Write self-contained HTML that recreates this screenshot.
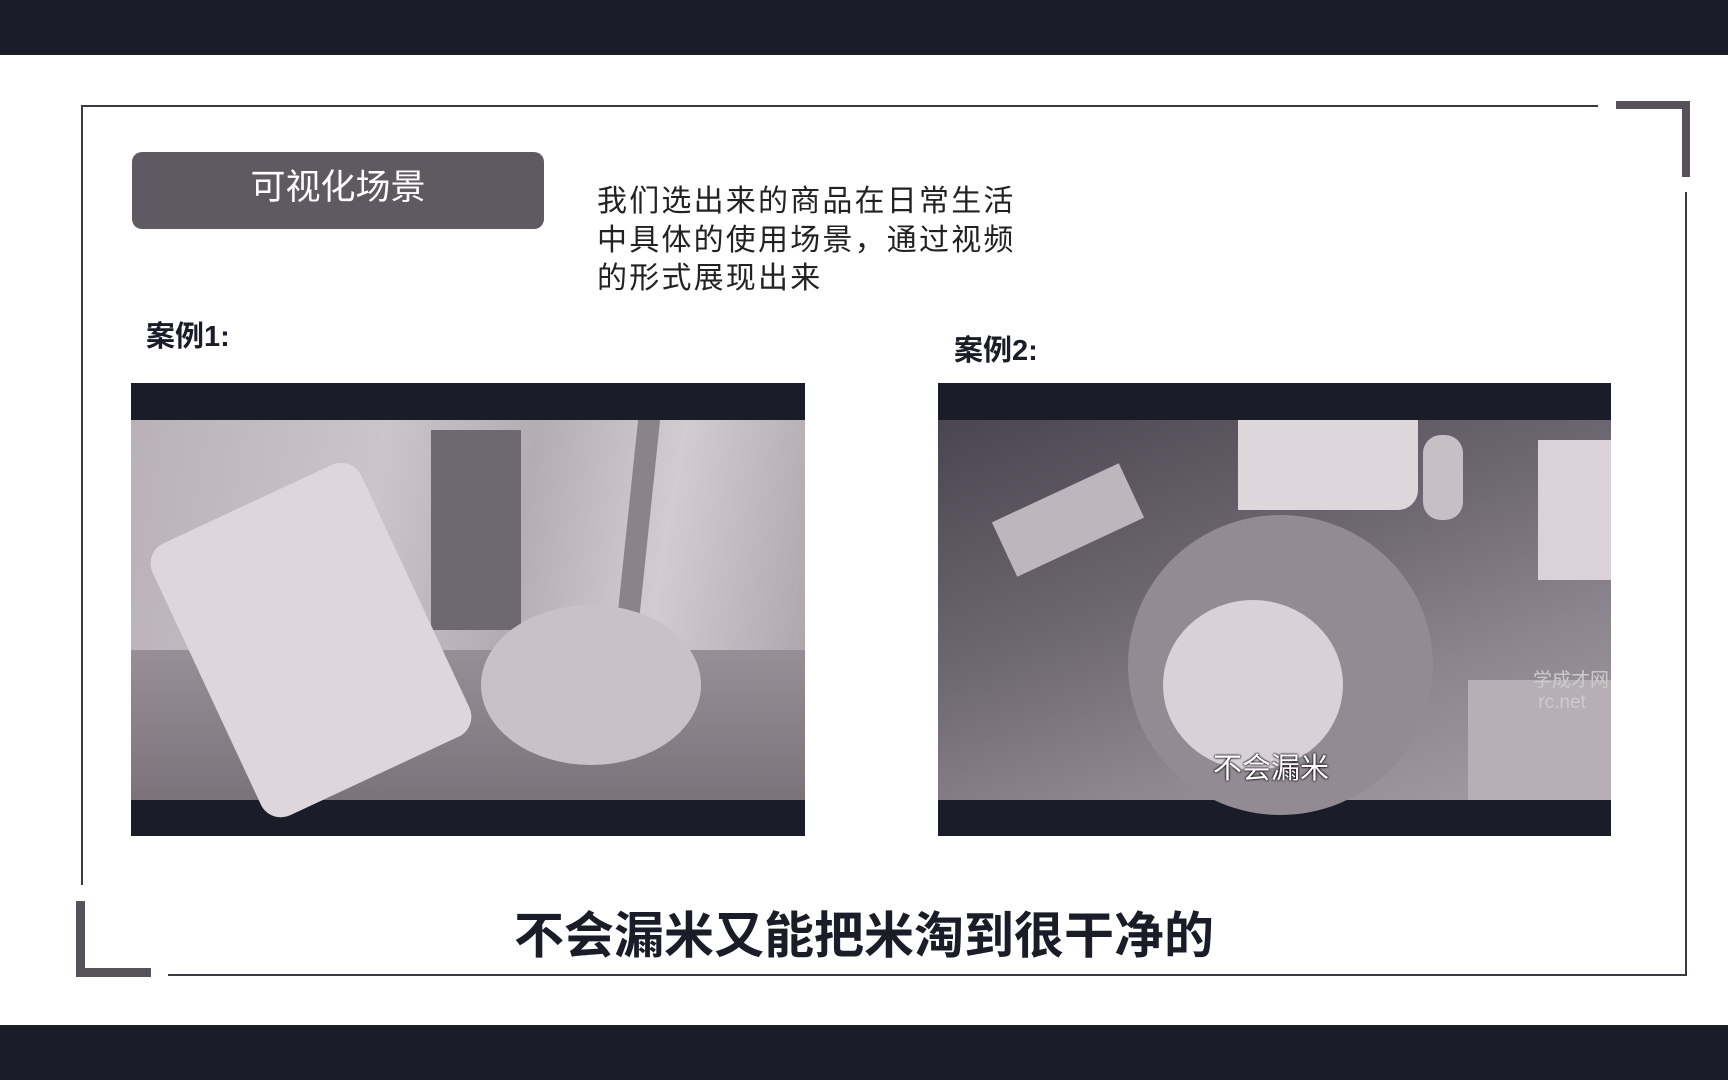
<!DOCTYPE html>
<html><head><meta charset="utf-8"><style>
*{margin:0;padding:0;box-sizing:border-box}
body{width:1728px;height:1080px;background:#fff;position:relative;overflow:hidden;font-family:"Liberation Sans","Noto Sans CJK SC",sans-serif;color:#1a1d27}
.a{position:absolute}
.dk{background:#1a1d27}
.ln{background:#3a3a44}
.br{background:#57525a}
</style></head><body>
<div class="a dk" style="left:0;top:0;width:1728px;height:55px"></div>
<div class="a dk" style="left:0;top:1025px;width:1728px;height:55px"></div>
<!-- frame -->
<div class="a ln" style="left:81px;top:105px;width:1517px;height:2px"></div>
<div class="a ln" style="left:81px;top:105px;width:2px;height:780px"></div>
<div class="a ln" style="left:1685px;top:192px;width:2px;height:784px"></div>
<div class="a ln" style="left:168px;top:974px;width:1519px;height:2px"></div>
<div class="a br" style="left:1616px;top:101px;width:74px;height:8px"></div>
<div class="a br" style="left:1682px;top:101px;width:8px;height:76px"></div>
<div class="a br" style="left:76px;top:901px;width:9px;height:76px"></div>
<div class="a br" style="left:76px;top:968px;width:75px;height:9px"></div>
<!-- label -->
<div class="a" style="left:132px;top:152px;width:412px;height:77px;background:#5f5a62;border-radius:10px;color:#fff;font-size:35px;text-align:center;line-height:72px">可视化场景</div>
<div class="a" style="left:597px;top:183px;font-size:30px;letter-spacing:2.2px;line-height:38.5px;color:#222">我们选出来的商品在日常生活<br>中具体的使用场景，通过视频<br>的形式展现出来</div>
<div class="a" style="left:146px;top:313px;font-size:29px;font-weight:bold">案例1:</div>
<div class="a" style="left:954px;top:327px;font-size:29px;font-weight:bold">案例2:</div>
<!-- image 1 -->
<div class="a dk" style="left:131px;top:383px;width:674px;height:453px;overflow:hidden">
 <div class="a" style="left:0;top:37px;width:674px;height:380px;background:linear-gradient(100deg,#b9b1b8 0%,#cbc4ca 35%,#b3acb2 55%,#d2ccd1 75%,#a9a1a8 100%)">
  <div class="a" style="left:300px;top:10px;width:90px;height:200px;background:#6e6870"></div>
  <div class="a" style="left:495px;top:0;width:22px;height:230px;background:#8a838a;transform:skewX(-6deg)"></div>
  <div class="a" style="left:0;top:230px;width:674px;height:150px;background:linear-gradient(180deg,#978f96,#7a737a)"></div>
  <div class="a" style="left:65px;top:70px;width:230px;height:300px;background:#ddd7dc;border-radius:22px;transform:rotate(-25deg)"></div>
  <div class="a" style="left:350px;top:185px;width:220px;height:160px;background:#c8c1c7;border-radius:50%"></div>
 </div>
</div>
<!-- image 2 -->
<div class="a dk" style="left:938px;top:383px;width:673px;height:453px;overflow:hidden">
 <div class="a" style="left:0;top:37px;width:673px;height:380px;background:linear-gradient(160deg,#4a4550 0%,#6c6670 40%,#8d868e 70%,#a59ea5 100%)">
  <div class="a" style="left:300px;top:0;width:180px;height:90px;background:#ddd7dc;border-radius:0 0 20px 0"></div>
  <div class="a" style="left:485px;top:15px;width:40px;height:85px;background:#c6bfc5;border-radius:18px"></div>
  <div class="a" style="left:60px;top:70px;width:140px;height:60px;background:#bdb6bc;transform:rotate(-25deg)"></div>
  <div class="a" style="left:190px;top:95px;width:305px;height:300px;background:#938b93;border-radius:50%"></div>
  <div class="a" style="left:225px;top:180px;width:180px;height:170px;background:#d8d2d7;border-radius:50%"></div>
  <div class="a" style="left:600px;top:20px;width:73px;height:140px;background:#d9d3d8"></div>
  <div class="a" style="left:530px;top:260px;width:143px;height:120px;background:#b6afb5"></div>
 </div>
 <div class="a" style="left:275px;top:362px;font-size:29px;color:#fff;text-shadow:0 0 2px #000,0 0 2px #000">不会漏米</div>
 <div class="a" style="left:595px;top:287px;font-size:19px;color:#ccc;line-height:22px">学成才网<br>&nbsp;rc.net</div>
</div>
<div class="a" style="left:0;top:896px;width:1728px;text-align:center;font-size:50px;font-weight:bold;color:#1a1d27">不会漏米又能把米淘到很干净的</div>
</body></html>
